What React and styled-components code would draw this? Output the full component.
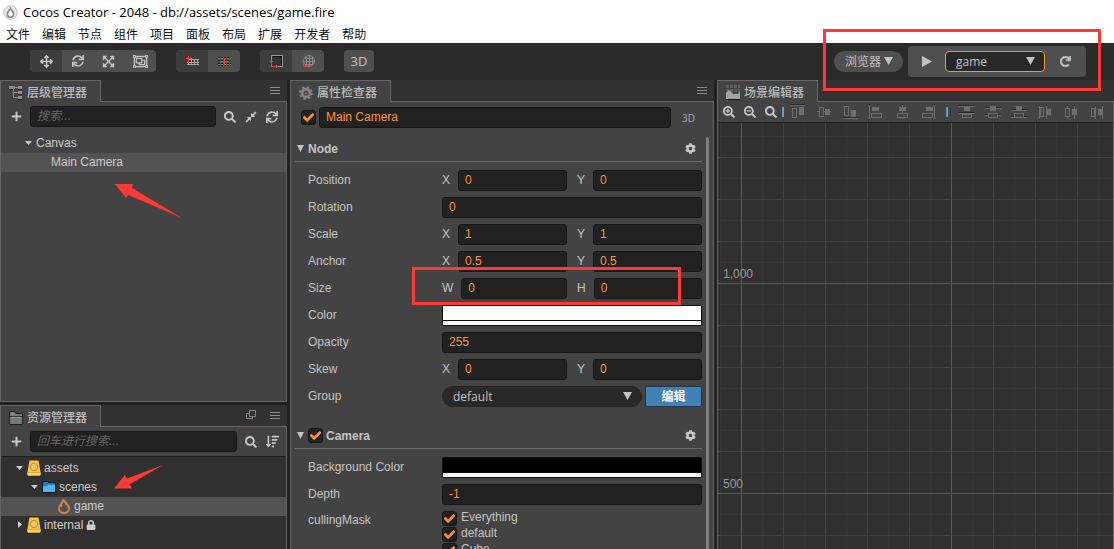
import React from "react";
import styled, { createGlobalStyle, css } from "styled-components";
import {
  FaArrowsAlt, FaSync, FaExpandArrowsAlt, FaRegObjectGroup, FaSearch, FaSearchPlus,
  FaSearchMinus, FaCompressAlt, FaLock, FaCog, FaPlus, FaSortAmountDown, FaCheck, FaRedo,
} from "react-icons/fa";

const colors = {
  panel: "#434343",
  bar: "#323232",
  line: "#666",
  dark: "#212121",
  text: "#c3c3c3",
  value: "#fd942b",
  mark: "#ff3838",
};

const ui = `"Liberation Sans", "Noto Sans CJK SC", sans-serif`;
const system = `"Open Sans", "Noto Sans CJK SC", sans-serif`;

const Global = createGlobalStyle`
  *, *::before, *::after { box-sizing: border-box; }
  body { margin: 0; background: #202020; }
  button, input, select { font: inherit; color: inherit; margin: 0; }
  button { border: 0; padding: 0; background: none; cursor: pointer; }
  svg { display: block; flex: none; }
`;

const Window = styled.div`
  position: relative;
  height: 100vh;
  min-width: 900px;
  display: flex;
  flex-direction: column;
  overflow: hidden;
  font: 12px/16px ${ui};
  color: ${colors.text};
`;

/* ---------- window chrome ---------- */

const TitleBar = styled.header`
  flex: none;
  height: 24px;
  display: flex;
  align-items: center;
  gap: 5px;
  padding-left: 3px;
  background: #fff;
  color: #000;
  font: 13px/20px ${system};
`;

const MenuBar = styled.nav`
  flex: none;
  height: 19px;
  display: flex;
  gap: 12px;
  padding-left: 6px;
  background: #fff;
`;

const MenuItem = styled.button`
  color: #111;
  line-height: 18px;
  font-family: "Noto Sans CJK SC", sans-serif;
`;

const Toolbar = styled.div`
  flex: none;
  height: 37px;
  display: flex;
  align-items: center;
  gap: 20px;
  padding: 0 28px 0 30px;
  background: #2a2a2a;
`;

const ToolGroup = styled.div`
  display: flex;
  height: 22px;
  margin-bottom: 1px;
  border-radius: 4px;
  overflow: hidden;
  background: #4f4f4f;
`;

const Tool = styled.button`
  width: ${(p) => p.$width || 32}px;
  display: grid;
  place-items: center;
  background: ${(p) => (p.$active ? "#3d3d3d" : "transparent")};
  font: 13px/22px ${system};
  color: ${colors.text};
`;

const PlayArea = styled.div`
  margin-left: auto;
  display: flex;
  align-items: center;
  gap: 5px;
`;

const PlayBox = styled.div`
  display: flex;
  align-items: center;
  height: 31px;
  border-radius: 4px;
  background: #4f4f4f;
`;

const SelectWrap = styled.span`
  position: relative;
  flex: ${(p) => p.$grow || "none"};
  display: block;
  color: ${colors.text};
  svg { position: absolute; right: 10px; top: 6px; pointer-events: none; }
`;

const SelectBox = styled.select`
  appearance: none;
  display: block;
  width: ${(p) => p.$width || "100%"};
  height: 21px;
  padding: 0 10px;
  font: 12px/18px ${system};
  outline: 0;
  ${(p) =>
    p.$look === "pill"
      ? css`border: 0; padding: 0 11px; border-radius: 11px; background: #4f4f4f;`
      : p.$look === "scene"
      ? css`border: 1px solid ${colors.value}; border-radius: 4px; background: #282828;`
      : css`border: 1px solid #242424; border-radius: 11px; background: #292929;`}
`;

/* ---------- panels ---------- */

const Workspace = styled.main`
  flex: 1;
  min-height: 0;
  display: grid;
  grid-template-columns: 287fr 424fr 397fr;
  gap: 3px;
`;

const LeftColumn = styled.div`
  min-width: 0;
  min-height: 0;
  display: grid;
  grid-template-rows: 322fr 144fr;
  gap: 3px;
`;

const PanelBox = styled.section`
  min-width: 0;
  min-height: 0;
  display: flex;
  flex-direction: column;
  overflow: hidden;
`;

const TabBar = styled.div`
  flex: none;
  display: flex;
  height: 22px;
  background: ${colors.bar};
`;

const Tab = styled.h2`
  margin: 0;
  width: 101px;
  display: flex;
  align-items: center;
  gap: 4px;
  padding: 2px 0 0 8px;
  border: 1px solid ${colors.line};
  border-bottom: 0;
  background: ${colors.panel};
  font-size: 12px;
  font-weight: 500;
  color: #bbb;
  white-space: nowrap;
`;

const TabRest = styled.div`
  flex: 1;
  display: flex;
  align-items: center;
  justify-content: flex-end;
  gap: 12px;
  padding: 0 6px 1px 0;
  border-bottom: 1px solid ${colors.line};
  color: #8c8c8c;
  button { color: #8c8c8c; }
`;

const PanelBody = styled.div`
  flex: 1;
  min-height: 0;
  display: flex;
  flex-direction: column;
  border: 1px solid ${colors.line};
  border-top: 0;
  border-bottom-width: ${(p) => (p.$open ? 0 : 1)}px;
  background: ${colors.panel};
`;

const SearchRow = styled.div`
  flex: none;
  display: flex;
  align-items: center;
  gap: 8px;
  padding: 4px 8px 4px 9px;
  color: #c8c8c8;
`;

const SearchTools = styled.div`
  display: flex;
  gap: 9px;
`;

const IconButton = styled.button`
  width: 12px;
  height: 16px;
  display: grid;
  place-items: center;
  color: #c8c8c8;
`;

const TextInput = styled.input`
  flex: 1;
  min-width: 0;
  width: 100%;
  height: 21px;
  padding: 0 6px 1px;
  border: 1px solid #161616;
  border-radius: 3px;
  background: ${colors.dark};
  color: ${colors.value};
  outline: 0;
  &::placeholder { color: #666; font-style: italic; opacity: 1; }
`;

const Tree = styled.ul`
  flex: 1;
  margin: 0;
  padding: ${(p) => (p.$dark ? 2 : 3)}px 0 0;
  list-style: none;
  background: ${(p) => (p.$dark ? "#303030" : "transparent")};
  border-top: ${(p) => (p.$dark ? "1px solid #1f1f1f" : "0")};
`;

const TreeRow = styled.li`
  height: 19px;
  display: flex;
  align-items: center;
  gap: 3px;
  padding: 0 0 2px ${(p) => p.$indent}px;
  background: ${(p) => (p.$selected ? "#535353" : "transparent")};
  color: #ccc;
`;

const Twisty = styled.span`
  width: 9px;
  display: grid;
  place-items: center;
`;

/* ---------- inspector ---------- */

const NameRow = styled.div`
  flex: none;
  display: flex;
  align-items: center;
  gap: 3px;
  padding: 5px 11px 4px 10px;
`;

const Mode3D = styled.button`
  width: 28px;
  padding-left: 1px;
  font: 10px/16px ${system};
  color: #aaa;
`;

const Scroller = styled.div`
  flex: 1;
  min-height: 0;
  overflow: hidden;
  display: flex;
  align-items: stretch;
  margin-top: 4px;
  padding: 0 4px;
`;

const Sections = styled.div`
  flex: 1;
  min-width: 0;
  display: flex;
  flex-direction: column;
  gap: 16px;
`;

const ScrollThumb = styled.div`
  width: 3px;
  margin: 1px 0 0 4px;
  border-radius: 2px 2px 0 0;
  background: #7d7d7d;
`;

const SectionHead = styled.h3`
  margin: 0 0 8px;
  height: 26px;
  display: flex;
  align-items: center;
  gap: 3px;
  padding: 0 6px 0 1px;
  border-bottom: 1px solid #6a6a6a;
  font-size: 12px;
  font-weight: bold;
`;

const SectionArrow = styled.span`
  width: 9px;
  padding-left: 1px;
`;

const HeadTool = styled(IconButton)`
  width: 11px;
  margin-left: auto;
`;

const Props = styled.div`
  display: flex;
  flex-direction: column;
  gap: 6px;
  padding-left: 13px;
`;

const Prop = styled.div`
  display: flex;
  align-items: ${(p) => (p.$tall ? "flex-start" : "center")};
`;

const PropName = styled.span`
  flex: 0 0 134px;
  padding-top: ${(p) => (p.$tall ? 1 : 0)}px;
  padding-bottom: ${(p) => (p.$tall ? 0 : 1)}px;
`;

const PropValue = styled.div`
  flex: 1;
  min-width: 0;
  display: flex;
  gap: ${(p) => p.$gap || 0}px;
`;

const Axis = styled.label`
  flex: 1 1 0;
  min-width: 0;
  display: flex;
  align-items: center;
  gap: 8px;
`;

const AxisName = styled.span`
  padding-bottom: 1px;
`;

const Swatch = styled.button`
  flex: 1;
  height: 21px;
  display: flex;
  flex-direction: column;
  border: 1px solid #111;
  border-radius: 2px;
  background: #111;
  &::before {
    content: "";
    width: 100%;
    flex: 1;
    margin-bottom: 1px;
    background: ${(p) => p.$color};
  }
  &::after {
    content: "";
    width: 100%;
    height: 4px;
    background: #fff;
  }
`;

const EditButton = styled.button`
  width: 57px;
  height: 21px;
  border: 1px solid #20364a;
  border-radius: 2px;
  background: #4281b6;
  color: #fff;
  font-weight: bold;
  line-height: 18px;
`;

const CheckWrap = styled.span`
  position: relative;
  width: 15px;
  height: 15px;
  svg {
    position: absolute;
    left: 2px;
    top: 2px;
    color: ${colors.value};
    stroke: ${colors.value};
    stroke-width: 30px;
    pointer-events: none;
  }
`;

const CheckInput = styled.input`
  appearance: none;
  display: block;
  width: 15px;
  height: 15px;
  border: 1px solid #161616;
  border-radius: 3px;
  background: ${colors.dark};
`;

const MaskList = styled.div`
  display: flex;
  flex-direction: column;
`;

const MaskItem = styled.label`
  height: 16px;
  display: flex;
  align-items: flex-start;
  gap: 4px;
  line-height: 13px;
`;

/* ---------- scene editor ---------- */

const SceneTools = styled.div`
  flex: none;
  height: 21px;
  display: flex;
  align-items: center;
  padding-left: 5px;
  overflow: hidden;
  border-bottom: 1px solid #1f1f1f;
`;

const ZoomTools = styled.div`
  display: flex;
  gap: 9px;
  margin-right: 5px;
`;

const Divider = styled.span`
  flex: none;
  width: 2px;
  height: 10px;
  margin-right: ${(p) => p.$after}px;
  background: linear-gradient(90deg, #6294b8 50%, #a09a86 50%);
`;

const AlignTools = styled.div`
  display: flex;
  gap: 10px;
  margin-right: 10px;
`;

const AlignButton = styled.button`
  width: 16px;
  height: 16px;
  color: #6e6e6e;
`;

const Grid = styled.div`
  position: relative;
  flex: 1;
  background-color: #303030;
  background-image:
    linear-gradient(90deg, #585858 1px, transparent 1px),
    linear-gradient(#585858 1px, transparent 1px),
    linear-gradient(90deg, #424242 1px, transparent 1px),
    linear-gradient(#424242 1px, transparent 1px),
    linear-gradient(90deg, #353535 1px, transparent 1px),
    linear-gradient(#353535 1px, transparent 1px);
  background-size: 210px 100%, 100% 210px, 42px 100%, 100% 42px, 21px 100%, 100% 21px;
  background-position: 23px 0, 0 160px, 23px 0, 0 34px, 2px 0, 0 13px;
`;

const Ruler = styled.span`
  position: absolute;
  left: 5px;
  top: ${(p) => p.$top}px;
  color: #9a9a9a;
`;

/* ---------- annotations over the window ---------- */

const MarkBox = styled.div`
  position: absolute;
  left: ${(p) => p.$x}px;
  top: ${(p) => p.$y}px;
  width: ${(p) => p.$w}px;
  height: ${(p) => p.$h}px;
  border: 3px solid ${colors.mark};
  pointer-events: none;
`;

const MarkArrow = styled.svg`
  position: absolute;
  left: ${(p) => p.$x}px;
  top: ${(p) => p.$y}px;
  fill: ${colors.mark};
  pointer-events: none;
`;

/* ---------- drawings ---------- */

const Down = ({ w = 9, h = 8 }) => (
  <svg width={w} height={h} viewBox="0 0 8 8" preserveAspectRatio="none" aria-hidden="true">
    <path d="M0 0h8L4 8z" fill="currentColor" />
  </svg>
);

const Right = ({ w = 5, h = 8 }) => (
  <svg width={w} height={h} viewBox="0 0 8 8" preserveAspectRatio="none" aria-hidden="true">
    <path d="M0 0v8l8-4z" fill="currentColor" />
  </svg>
);

const Logo = () => (
  <svg width="15" height="15" viewBox="0 0 15 15" aria-hidden="true">
    <circle cx="7.5" cy="7.5" r="6.8" fill="#e6e6e6" stroke="#c4c4c4" />
    <path d="M7.300 1.500C8 4.200 11.500 5.800 11.500 9a4 4 0 0 1-8 0C3.500 6.200 6.600 4.800 7.300 1.500z" fill="#8b8f90" />
    <path d="M7.500 4.800c.3 1.700 2.300 2.600 2.300 4.300a2.300 2.300 0 0 1-4.600 0c0-1.700 2-2.600 2.300-4.300z" fill="#fff" />
  </svg>
);

const Bars = () => (
  <svg width="10" height="9" viewBox="0 0 10 9" aria-hidden="true">
    <path d="M0 1.500h10M0 4.500h10M0 7.500h10" stroke="currentColor" />
  </svg>
);

const Restore = () => (
  <svg width="10" height="10" viewBox="0 0 10 10" fill="none" stroke="#7f8791" aria-hidden="true">
    <path d="M3.500.5h6v6h-6z" />
    <path d="M3 3.500H.5v5h6V7" />
  </svg>
);

const TreeIcon = () => (
  <svg width="14" height="15" viewBox="0 0 14 15" aria-hidden="true">
    <path d="M0 1h6v3H0zM9 1h4v3H9zM9 6h4v3H9zM9 11h4v3H9z" fill="#8c8c8c" />
    <path d="M0 4.500h6M9 4.500h4M9 9.500h4M9 14.500h4" stroke="#1c1c1c" />
    <path d="M6 2.500h3M4.500 4v8.500H9M4.500 7.500H9" stroke="#8c8c8c" fill="none" />
  </svg>
);

const FolderTabIcon = () => (
  <svg width="14" height="14" viewBox="0 0 14 14" aria-hidden="true">
    <path d="M.5 13.500V2Q.5.5 2 .5h3.500l1.500 2h5.500q1 0 1 1v10z" fill="#777" stroke="#1d1d1d" />
    <path d="M1 5.500h12" stroke="#333" />
    <path d="M2 6.500h10M2 3h4" stroke="#9a9a9a" />
  </svg>
);

const GearTabIcon = () => (
  <svg width="14" height="14" viewBox="0 0 14 14" fill="none" stroke="#858585" aria-hidden="true">
    <circle cx="7" cy="7" r="3.900" strokeWidth="2.600" />
    <circle cx="7" cy="7" r="5.900" strokeWidth="2" strokeDasharray="2.320 2.320" />
    <circle cx="7" cy="7" r="1" fill="#858585" stroke="none" />
  </svg>
);

const SceneTabIcon = () => (
  <svg width="14" height="15" viewBox="0 0 14 15" aria-hidden="true">
    <path d="M0 0h3v3H0zM4 0h3v3H4zM8 0h3v3H8zM12 0h2v3h-2zM0 4h3v3H0zM4 4h3v3H4zM8 4h3v3H8zM12 4h2v3h-2z" fill="#5e5e5e" />
    <path d="M0 14V8l3-3 5 4.500 2-1 1.500 1L14 6v8z" fill="#a3a3a3" />
    <path d="M0 14.500h14" stroke="#111" />
  </svg>
);

const DbIcon = () => (
  <svg width="14" height="16" viewBox="0 0 14 16" aria-hidden="true">
    <path d="M2.500.5h9L13.500 12v2.500q0 1-1 1h-11q-1 0-1-1V12z" fill="#ffc340" />
    <path d="M.5 12.500h13V14.500q0 1-1 1h-11q-1 0-1-1z" fill="#ffd264" />
    <path d="M.5 12.500h13" stroke="#e0a632" />
    <circle cx="7" cy="7" r="3.700" fill="#f3c56a" stroke="#c48d22" />
  </svg>
);

const FolderIcon = () => (
  <svg width="14" height="12" viewBox="0 0 14 12" aria-hidden="true">
    <path d="M.5 11.500V.5h5l1 1.500h7v9.500z" fill="#4fb4ff" stroke="#101820" />
    <path d="M1 1h4.300l1 1.500H13V4H6L5 5H1z" fill="#0e7fd0" />
  </svg>
);

const FireIcon = () => (
  <svg width="14" height="16" viewBox="0 0 14 16" aria-hidden="true">
    <path d="M6.500 1.500C7 4 12 6.500 12 10.500c0 2.500-2 4.500-5 4.500s-5-2-5-4.500c0-2 1-3 2-4.300C5 5 6 3.500 6.500 1.500z" fill="none" stroke="#dd8643" strokeWidth="1.800" />
    <path d="M4.500 5.500l.3 3.500M9 5.500l-.2 1.800" stroke="#dd8643" />
  </svg>
);

const GridPivot = () => (
  <svg width="13" height="13" viewBox="0 0 13 13" aria-hidden="true">
    <path d="M3 4.500h10M1 7.500h12M1 9.500h12M2.500 4v6M5.500 3v7M8.500 4v6M11.500 4v6" stroke="#a4a4a4" fill="none" />
    <path d="M0 3.500h5M2.500 1v7" stroke="#ff3b3b" />
  </svg>
);

const GridCenter = () => (
  <svg width="13" height="13" viewBox="0 0 13 13" aria-hidden="true">
    <path d="M0 2.500h13M0 5.500h13M0 8.500h13M0 10.500h13" stroke="#222" strokeDasharray="2 1" />
    <path d="M0 3.500h13M0 9.500h13" stroke="#777" strokeDasharray="2 1" />
    <path d="M2 6.500h9M6.500 3v7" stroke="#ff3b3b" />
  </svg>
);

const LocalAxes = () => (
  <svg width="13" height="13" viewBox="0 0 13 13" aria-hidden="true">
    <path d="M1.500.5h11v11h-11z" fill="#333" stroke="#999" />
    <path d="M3 1.500h8.500V11" stroke="#111" fill="none" />
    <path d="M1.500 5v6.500H8M0 6.500h3M6.500 10v3" stroke="#ff3b3b" fill="none" />
  </svg>
);

const WorldAxes = () => (
  <svg width="13" height="13" viewBox="0 0 13 13" aria-hidden="true">
    <circle cx="7" cy="6" r="5.500" fill="none" stroke="#8c8c8c" />
    <path d="M7.500 1v10M2 6.500h10M3 3.500h8M3 9.500h8M4.500 2v8M10.500 2v8" stroke="#8c8c8c" fill="none" />
    <path d="M1.500 5v6.500H8M0 6.500h3M6.500 10v3" stroke="#ff3b3b" fill="none" />
  </svg>
);

/* Each align icon: guide lines, one solid block and one outlined block. */
const alignIcons = [
  { label: "Align top", line: "M1 1.500h14", solid: [9, 3, 5, 8], hollow: [2.5, 4.5, 4, 9] },
  { label: "Align vertical center", line: "M1 7.500h14", solid: [9, 5, 5, 6], hollow: [3.5, 3.5, 4, 9] },
  { label: "Align bottom", line: "M1 14.500h14", solid: [9, 6, 5, 7], hollow: [2.5, 2.5, 4, 9] },
  { label: "Align left", line: "M1.500 1v14", solid: [4, 3, 7, 4], hollow: [3.5, 9.5, 10, 4] },
  { label: "Align horizontal center", line: "M8.500 1v14", solid: [5, 3, 7, 4], hollow: [3.5, 9.5, 10, 4] },
  { label: "Align right", line: "M14.500 1v14", solid: [6, 3, 7, 4], hollow: [2.5, 9.5, 10, 4] },
];
const distributeIcons = [
  { label: "Distribute top", line: "M0 2.500h16M0 9.500h16", solid: [5, 3, 6, 4], hollow: [3.5, 10.5, 9, 3] },
  { label: "Distribute vertical center", line: "M0 4.500h16M0 11.500h16", solid: [5, 2, 6, 5], hollow: [3.5, 9.5, 9, 4] },
  { label: "Distribute bottom", line: "M0 6.500h16M0 13.500h16", solid: [5, 2, 6, 4], hollow: [3.5, 9.5, 9, 4] },
  { label: "Distribute left", line: "M2.500 2v13M9.500 2v13", solid: [10, 5, 4, 6], hollow: [3.5, 3.5, 3, 9] },
  { label: "Distribute horizontal center", line: "M4.500 2v13M11.500 2v13", solid: [9, 5, 5, 6], hollow: [2.5, 4.5, 4, 8] },
  { label: "Distribute right", line: "M6.500 2v13M13.500 2v13", solid: [9, 5, 4, 6], hollow: [2.5, 4.5, 3, 8] },
];

const box = ([x, y, width, height]) => ({ x, y, width, height });

const AlignSet = ({ items }) => (
  <AlignTools>
    {items.map((it) => (
      <AlignButton key={it.label} aria-label={it.label}>
        <svg width="16" height="16" viewBox="0 0 16 16">
          <path d={it.line} stroke="#262626" transform="translate(0 -1)" />
          <path d={it.line} stroke="currentColor" />
          <rect {...box(it.solid)} fill="currentColor" />
          <rect {...box(it.hollow)} fill={colors.panel} stroke="currentColor" />
        </svg>
      </AlignButton>
    ))}
  </AlignTools>
);

/* ---------- parts ---------- */

const Check = (props) => (
  <CheckWrap>
    <CheckInput type="checkbox" defaultChecked {...props} />
    <FaCheck size={11} />
  </CheckWrap>
);

const Panel = ({ icon, title, tools, open, children }) => (
  <PanelBox>
    <TabBar>
      <Tab>{icon}{title}</Tab>
      <TabRest>{tools}</TabRest>
    </TabBar>
    <PanelBody $open={open}>{children}</PanelBody>
  </PanelBox>
);

const MenuButton = () => <IconButton aria-label="面板菜单"><Bars /></IconButton>;

const Pair = ({ name, axes, values }) => (
  <Prop>
    <PropName>{name}</PropName>
    <PropValue $gap={10}>
      {axes.map((axis, i) => (
        <Axis key={axis}>
          <AxisName>{axis}</AxisName>
          <TextInput defaultValue={values[i]} />
        </Axis>
      ))}
    </PropValue>
  </Prop>
);

const Single = ({ name, value }) => (
  <Prop as="label">
    <PropName>{name}</PropName>
    <PropValue><TextInput defaultValue={value} /></PropValue>
  </Prop>
);

const ColorProp = ({ name, color }) => (
  <Prop>
    <PropName>{name}</PropName>
    <PropValue><Swatch $color={color} aria-label={name} /></PropValue>
  </Prop>
);

const menus = ["文件", "编辑", "节点", "组件", "项目", "面板", "布局", "扩展", "开发者", "帮助"];

export default function App() {
  return (
    <Window>
      <Global />
      <TitleBar><Logo />Cocos Creator - 2048 - db://assets/scenes/game.fire</TitleBar>
      <MenuBar>{menus.map((m) => <MenuItem key={m}>{m}</MenuItem>)}</MenuBar>

      <Toolbar>
        <ToolGroup>
          <Tool $active aria-label="Move"><FaArrowsAlt size={13} /></Tool>
          <Tool $width={31} aria-label="Rotate"><FaSync size={12} /></Tool>
          <Tool $width={31} aria-label="Scale"><FaExpandArrowsAlt size={13} /></Tool>
          <Tool aria-label="Rect"><FaRegObjectGroup size={15} /></Tool>
        </ToolGroup>
        <ToolGroup>
          <Tool $active aria-label="Pivot"><GridPivot /></Tool>
          <Tool aria-label="Center"><GridCenter /></Tool>
        </ToolGroup>
        <ToolGroup>
          <Tool $active aria-label="Local"><LocalAxes /></Tool>
          <Tool aria-label="World"><WorldAxes /></Tool>
        </ToolGroup>
        <ToolGroup><Tool $width={30}>3D</Tool></ToolGroup>
        <PlayArea>
          <SelectWrap>
            <SelectBox $look="pill" $width="69px" aria-label="预览平台"><option>浏览器</option></SelectBox>
            <Down />
          </SelectWrap>
          <PlayBox>
            <Tool $width={37} aria-label="Play"><Right w={10} h={11} /></Tool>
            <SelectWrap>
              <SelectBox $look="scene" $width="100px" aria-label="场景"><option>game</option></SelectBox>
              <Down />
            </SelectWrap>
            <Tool $width={41} aria-label="Reload">
              <FaRedo size={11} stroke="currentColor" strokeWidth={30} />
            </Tool>
          </PlayBox>
        </PlayArea>
      </Toolbar>

      <Workspace>
        <LeftColumn>
          <Panel icon={<TreeIcon />} title="层级管理器" tools={<MenuButton />}>
            <SearchRow>
              <IconButton aria-label="新建节点"><FaPlus size={11} /></IconButton>
              <TextInput placeholder="搜索..." aria-label="搜索" />
              <SearchTools>
                <IconButton aria-label="搜索"><FaSearch size={12} /></IconButton>
                <IconButton aria-label="折叠"><FaCompressAlt size={12} /></IconButton>
                <IconButton aria-label="刷新"><FaSync size={12} /></IconButton>
              </SearchTools>
            </SearchRow>
            <Tree>
              <TreeRow $indent={23}><Twisty><Down w={7} h={4} /></Twisty>Canvas</TreeRow>
              <TreeRow $indent={50} $selected>Main Camera</TreeRow>
            </Tree>
          </Panel>

          <Panel
            open
            icon={<FolderTabIcon />}
            title="资源管理器"
            tools={<><IconButton aria-label="弹出"><Restore /></IconButton><MenuButton /></>}
          >
            <SearchRow>
              <IconButton aria-label="新建资源"><FaPlus size={11} /></IconButton>
              <TextInput placeholder="回车进行搜索..." aria-label="搜索资源" />
              <SearchTools>
                <IconButton aria-label="搜索"><FaSearch size={12} /></IconButton>
                <IconButton aria-label="排序"><FaSortAmountDown size={13} /></IconButton>
              </SearchTools>
            </SearchRow>
            <Tree $dark>
              <TreeRow $indent={14}><Twisty><Down w={7} h={4} /></Twisty><DbIcon />assets</TreeRow>
              <TreeRow $indent={29}><Twisty><Down w={7} h={4} /></Twisty><FolderIcon />scenes</TreeRow>
              <TreeRow $indent={56} $selected><FireIcon />game</TreeRow>
              <TreeRow $indent={14}><Twisty><Right w={4} h={7} /></Twisty><DbIcon />internal<FaLock size={10} /></TreeRow>
            </Tree>
          </Panel>
        </LeftColumn>

        <Panel open icon={<GearTabIcon />} title="属性检查器" tools={<MenuButton />}>
          <NameRow>
            <Check aria-label="Active" />
            <TextInput defaultValue="Main Camera" aria-label="Name" />
            <Mode3D>3D</Mode3D>
          </NameRow>
          <Scroller>
            <Sections>
              <section>
                <SectionHead>
                  <SectionArrow><Down w={7} h={7} /></SectionArrow>Node
                  <HeadTool aria-label="Node settings"><FaCog size={11} /></HeadTool>
                </SectionHead>
                <Props>
                  <Pair name="Position" axes={["X", "Y"]} values={["0", "0"]} />
                  <Single name="Rotation" value="0" />
                  <Pair name="Scale" axes={["X", "Y"]} values={["1", "1"]} />
                  <Pair name="Anchor" axes={["X", "Y"]} values={["0.5", "0.5"]} />
                  <Pair name="Size" axes={["W", "H"]} values={["0", "0"]} />
                  <ColorProp name="Color" color="#fff" />
                  <Single name="Opacity" value="255" />
                  <Pair name="Skew" axes={["X", "Y"]} values={["0", "0"]} />
                  <Prop>
                    <PropName>Group</PropName>
                    <PropValue $gap={3}>
                      <SelectWrap $grow="1">
                        <SelectBox aria-label="Group"><option>default</option></SelectBox>
                        <Down />
                      </SelectWrap>
                      <EditButton>编辑</EditButton>
                    </PropValue>
                  </Prop>
                </Props>
              </section>
              <section>
                <SectionHead>
                  <SectionArrow><Down w={7} h={7} /></SectionArrow>
                  <Check aria-label="Camera enabled" />Camera
                  <HeadTool aria-label="Camera settings"><FaCog size={11} /></HeadTool>
                </SectionHead>
                <Props>
                  <ColorProp name="Background Color" color="#000" />
                  <Single name="Depth" value="-1" />
                  <Prop $tall>
                    <PropName $tall>cullingMask</PropName>
                    <MaskList>
                      <MaskItem><Check />Everything</MaskItem>
                      <MaskItem><Check />default</MaskItem>
                      <MaskItem><Check />Cube</MaskItem>
                    </MaskList>
                  </Prop>
                </Props>
              </section>
            </Sections>
            <ScrollThumb />
          </Scroller>
        </Panel>

        <Panel open icon={<SceneTabIcon />} title="场景编辑器">
          <SceneTools>
            <ZoomTools>
              <IconButton aria-label="放大"><FaSearchPlus size={12} /></IconButton>
              <IconButton aria-label="缩小"><FaSearchMinus size={12} /></IconButton>
              <IconButton aria-label="还原"><FaSearch size={12} /></IconButton>
            </ZoomTools>
            <Divider $after={6} />
            <AlignSet items={alignIcons} />
            <Divider $after={11} />
            <AlignSet items={distributeIcons} />
          </SceneTools>
          <Grid>
            <Ruler $top={143}>1,000</Ruler>
            <Ruler $top={353}>500</Ruler>
          </Grid>
        </Panel>
      </Workspace>

      <MarkBox $x={823} $y={29} $w={278} $h={62} />
      <MarkBox $x={412} $y={267} $w={269} $h={38} />
      <MarkArrow $x={115} $y={184} width="67" height="34" viewBox="0 0 67 34">
        <path d="M0 0h18l-1.300 3.700L67 34 13.300 11 11 14z" />
      </MarkArrow>
      <MarkArrow $x={114} $y={465} width="49" height="24" viewBox="0 0 49 24">
        <path d="M0 23.500L10.700 10 13 13.500 49 0 15.500 19.500l2.800 4z" />
      </MarkArrow>
    </Window>
  );
}
